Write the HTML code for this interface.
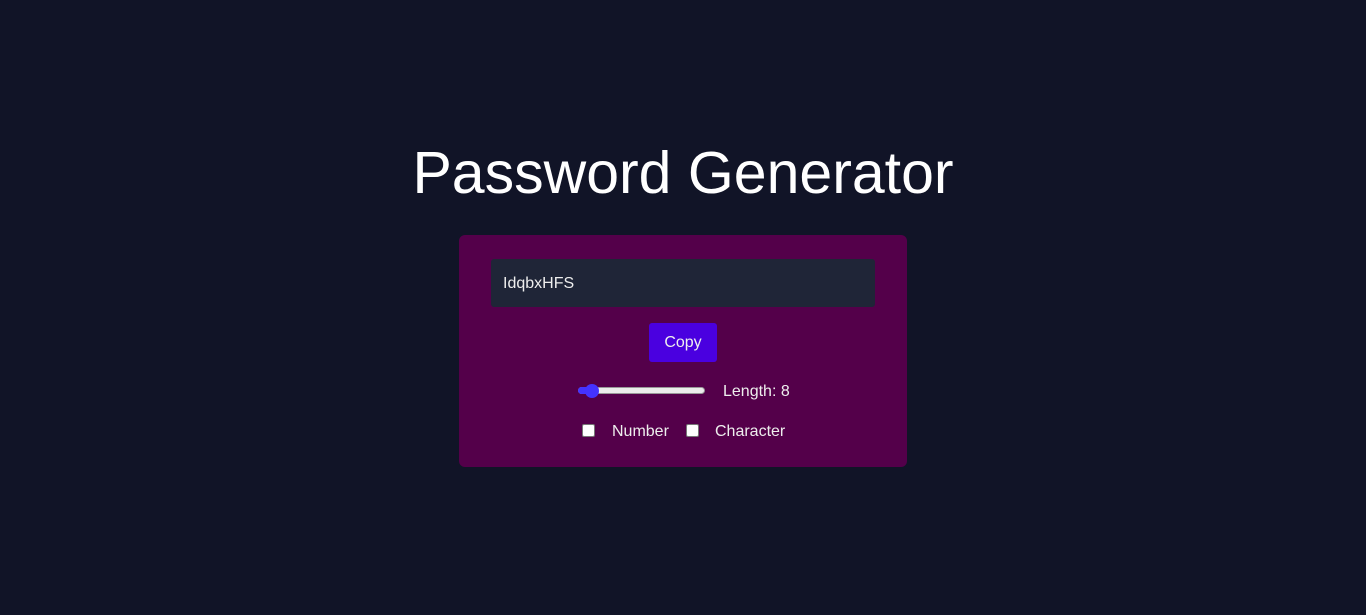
<!DOCTYPE html>
<html><head><meta charset="utf-8"><style>
html,body{margin:0;padding:0;width:1366px;height:615px;background:#111427;overflow:hidden;font-family:"Liberation Sans",sans-serif;color:#fff}
.t{position:absolute;left:0;width:1366px;top:137px;text-align:center;font-size:59px;line-height:72px}
.card{position:absolute;left:459px;top:235px;width:448px;height:232px;background:#54004a;border-radius:6px}
.inp{position:absolute;left:32px;top:24px;width:384px;height:48px;background:#1f2537;border-radius:3px;font-size:16px;line-height:50px;padding-left:12px;box-sizing:border-box;color:#eee}
.btn{position:absolute;left:190px;top:88px;width:68px;height:39px;background:#4a00e0;border-radius:3px;text-align:center;line-height:40px;font-size:16px;color:#eee}
.tr{position:absolute;left:119px;top:152px;width:127px;height:7px;background:#ececec;border-radius:4px;border:1px solid #999;box-sizing:border-box}
.fill{position:absolute;left:119px;top:152px;width:14px;height:7px;background:#4433ff;border-radius:4px}
.th{position:absolute;left:126px;top:149px;width:14px;height:14px;border-radius:50%;background:#4433ff}
.lb{position:absolute;font-size:16px;color:#eee;line-height:20px}
.cb{position:absolute;width:11px;height:11px;background:#fff;border:1px solid #777;border-radius:2px}
</style></head><body>
<div class="t">Password Generator</div>
<div class="card">
<div class="inp">IdqbxHFS</div>
<div class="btn">Copy</div>
<div class="tr"></div><div class="fill"></div><div class="th"></div>
<div class="lb" style="left:264px;top:147px">Length: 8</div>
<div class="cb" style="left:123px;top:189px"></div>
<div class="lb" style="left:153px;top:187px">Number</div>
<div class="cb" style="left:227px;top:189px"></div>
<div class="lb" style="left:256px;top:187px">Character</div>
</div>
</body></html>
